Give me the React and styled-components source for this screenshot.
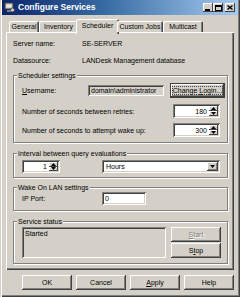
import React from 'react';
import styled, { createGlobalStyle, css } from 'styled-components';

const GlobalStyle = createGlobalStyle`
  html, body { margin: 0; padding: 0; background: #d4d0c8; }
  body {
    font-family: "Liberation Sans", Arial, sans-serif;
    font-size: 7px;
    line-height: 9px;
    color: #000;
  }
  * { box-sizing: border-box; }
`;

const raised = css`
  background: #d4d0c8;
  box-shadow: inset -1px -1px #404040, inset 1px 1px #fff, inset -2px -2px #808080;
`;

const raisedThin = css`
  background: #d4d0c8;
  box-shadow: inset -1px -1px #404040, inset 1px 1px #fff;
`;

const sunken = css`
  box-shadow: inset 1px 1px #808080, inset -1px -1px #fff, inset 2px 2px #404040, inset -2px -2px #d4d0c8;
`;

const Window = styled.div`
  width: 240px;
  height: 297px;
  display: flex;
  flex-direction: column;
  padding: 0 2px 2px;
  background: #d4d0c8;
  box-shadow: inset 1px 0 #d4d0c8, inset 2px 0 #fff, inset -1px -1px #404040, inset -2px -2px #808080;
`;

const TitleBar = styled.div`
  height: 15px;
  display: flex;
  align-items: center;
  gap: 3px;
  padding: 0 3px 0 2px;
  background: linear-gradient(90deg, #0a246a 0%, #3a6ea5 45%, #a6caf0 100%);
`;

const Title = styled.span`
  color: #fff;
  font-weight: bold;
  font-size: 8.5px;
  white-space: nowrap;
`;

const Controls = styled.div`
  margin-left: auto;
  display: flex;
`;

const TitleButton = styled.div`
  width: 10px;
  height: 9px;
  margin-left: ${p => (p.$gap ? 2 : 0)}px;
  display: flex;
  align-items: center;
  justify-content: center;
  ${raisedThin}
`;

const TabStrip = styled.div`
  height: 13px;
  margin-top: 4px;
  padding-left: 7px;
  display: flex;
  align-items: flex-end;
  position: relative;
  z-index: 2;
`;

const Tab = styled.div`
  width: ${p => p.$w + (p.$active ? 4 : 0)}px;
  height: ${p => (p.$active ? 15 : 11)}px;
  margin: 0 ${p => (p.$active ? -2 : 0)}px ${p => (p.$active ? -2 : 0)}px;
  padding-bottom: ${p => (p.$active ? 3 : 0)}px;
  display: flex;
  align-items: center;
  justify-content: center;
  white-space: nowrap;
  background: #d4d0c8;
  border-radius: 2px 2px 0 0;
  box-shadow: inset 1px 1px #fff, inset -1px 0 #404040, inset -2px 0 #808080;
`;

const Panel = styled.div`
  flex: 1;
  margin: 0 4px;
  padding: 6px 6px 5px 7px;
  display: flex;
  flex-direction: column;
  position: relative;
  z-index: 1;
  box-shadow: inset 1px 1px #fff, inset -1px -1px #404040, inset -2px -2px #808080;
`;

const InfoRow = styled.div`
  display: grid;
  grid-template-columns: 69px 1fr;
  align-items: center;
  height: 10px;
  margin-top: ${p => p.$mt || 0}px;
  white-space: nowrap;
`;

const Group = styled.div`
  position: relative;
  margin-top: ${p => p.$mt}px;
  padding: ${p => p.$pad};
  border: 1px solid #808080;
  box-shadow: inset 1px 1px #fff, 1px 1px #fff;
`;

const Legend = styled.span`
  position: absolute;
  top: -5px;
  left: 3px;
  padding: 0 1px;
  background: #d4d0c8;
  white-space: nowrap;
`;

const Rows = styled.div`
  display: flex;
  flex-direction: column;
`;

const Row = styled.div`
  display: flex;
  align-items: center;
  justify-content: ${p => p.$justify || 'flex-start'};
  gap: ${p => p.$gap || 0}px;
  margin-top: ${p => p.$mt || 0}px;
  white-space: nowrap;
`;

const Label = styled.span`
  flex: ${p => (p.$w ? 'none' : 1)};
  width: ${p => (p.$w ? `${p.$w}px` : 'auto')};
`;

const Field = styled.div`
  width: ${p => p.$w}px;
  height: ${p => p.$h}px;
  padding: 2px 2px 2px 3px;
  display: flex;
  align-items: ${p => (p.$top ? 'flex-start' : 'center')};
  background: ${p => (p.$readonly ? '#d4d0c8' : '#fff')};
  overflow: hidden;
  white-space: nowrap;
  ${sunken}
`;

const SpinBox = styled.div`
  width: ${p => p.$w}px;
  height: ${p => p.$h}px;
  margin-right: ${p => p.$mr || 0}px;
  padding: 2px;
  display: flex;
  background: #fff;
  ${sunken}
`;

const SpinValue = styled.div`
  flex: 1;
  display: flex;
  align-items: center;
  justify-content: flex-end;
  padding-right: 2px;
`;

const SpinButtons = styled.div`
  width: 9px;
  display: flex;
  flex-direction: column;
`;

const SpinButton = styled.div`
  flex: 1;
  display: flex;
  align-items: center;
  justify-content: center;
  ${raisedThin}
`;

const Combo = styled.div`
  width: ${p => p.$w}px;
  height: 13px;
  padding: 2px;
  display: flex;
  background: #fff;
  ${sunken}
`;

const ComboText = styled.div`
  flex: 1;
  display: flex;
  align-items: center;
  padding-left: 2px;
`;

const DropButton = styled.div`
  width: 11px;
  display: flex;
  align-items: center;
  justify-content: center;
  ${raised}
`;

const Button = styled.button`
  position: relative;
  width: ${p => p.$w || 50}px;
  height: 15px;
  padding: 0;
  border: 0;
  font: inherit;
  white-space: nowrap;
  overflow: visible;
  color: ${p => (p.disabled ? '#808080' : '#000')};
  text-shadow: ${p => (p.disabled ? '1px 1px #fff' : 'none')};
  ${raised}
  ${p =>
    p.$default &&
    css`
      box-shadow: inset 0 0 0 1px #404040, inset -2px -2px #404040, inset 2px 2px #fff, inset -3px -3px #808080;
      &::after {
        content: '';
        position: absolute;
        inset: 3px 2px;
        border: 1px dotted #404040;
      }
    `}
`;

const ButtonStack = styled.div`
  display: flex;
  flex-direction: column;
  gap: 1px;
`;

const ButtonRow = styled.div`
  height: 15px;
  margin: 5px 4px 5px;
  display: flex;
  justify-content: flex-end;
  gap: 4px;
`;

const Arrow = ({ up }) => (
  <svg width="5" height="3" viewBox="0 0 5 3">
    <polygon points={up ? '2.5,0 5,3 0,3' : '0,0 5,0 2.5,3'} fill="#000" />
  </svg>
);

const AppIcon = () => (
  <svg width="11" height="11" viewBox="0 0 11 11">
    <rect x="1" y="1" width="8" height="6" fill="#c0c0c0" stroke="#404040" strokeWidth="1" />
    <rect x="2.5" y="2.5" width="5" height="3" fill="#e8e8e8" />
    <rect x="3" y="8" width="5" height="2" fill="#808080" />
    <circle cx="8.5" cy="8" r="2" fill="#d4d0c8" stroke="#404040" strokeWidth="0.8" />
  </svg>
);

const tabs = [
  { label: 'General', w: 30 },
  { label: 'Inventory', w: 39 },
  { label: 'Scheduler', w: 39, active: true },
  { label: 'Custom Jobs', w: 46 },
  { label: 'Multicast', w: 40 },
];

function Spinner({ value, w, h, mr }) {
  return (
    <SpinBox $w={w} $h={h} $mr={mr}>
      <SpinValue>{value}</SpinValue>
      <SpinButtons>
        <SpinButton><Arrow up /></SpinButton>
        <SpinButton><Arrow /></SpinButton>
      </SpinButtons>
    </SpinBox>
  );
}

export default function App() {
  return (
    <>
      <GlobalStyle />
      <Window>
        <TitleBar>
          <AppIcon />
          <Title>Configure Services</Title>
          <Controls>
            <TitleButton>
              <svg width="6" height="6" viewBox="0 0 6 6"><rect x="0" y="4" width="5" height="2" fill="#000" /></svg>
            </TitleButton>
            <TitleButton>
              <svg width="7" height="6" viewBox="0 0 7 6"><rect x="0.5" y="0.5" width="6" height="5" fill="none" stroke="#000" /><rect x="0" y="0" width="7" height="2" fill="#000" /></svg>
            </TitleButton>
            <TitleButton $gap>
              <svg width="6" height="5" viewBox="0 0 6 5"><path d="M0.5 0.5 L5.5 4.5 M5.5 0.5 L0.5 4.5" stroke="#000" strokeWidth="1.3" /></svg>
            </TitleButton>
          </Controls>
        </TitleBar>

        <TabStrip>
          {tabs.map(t => (
            <Tab key={t.label} $w={t.w} $active={t.active}>{t.label}</Tab>
          ))}
        </TabStrip>

        <Panel>
          <InfoRow>
            <span>Server name:</span>
            <span>SE-SERVER</span>
          </InfoRow>
          <InfoRow $mt={7}>
            <span>Datasource:</span>
            <span>LANDesk Management database</span>
          </InfoRow>

          <Group $mt={10} $pad="7px 2px 5px 8px">
            <Legend>Scheduler settings</Legend>
            <Rows>
              <Row $gap={6}>
                <Label><u>U</u>sername:</Label>
                <Field $w={76} $h={11} $readonly>domain\administrator</Field>
                <Button $w={55} $default>Change <u>L</u>ogin...</Button>
              </Row>
              <Row $mt={6}>
                <Label>Number of seconds between retries:</Label>
                <Spinner value="180" w={47} h={14} mr={5} />
              </Row>
              <Row $mt={5}>
                <Label>Number of seconds to attempt wake up:</Label>
                <Spinner value="300" w={47} h={14} mr={5} />
              </Row>
            </Rows>
          </Group>

          <Group $mt={10} $pad="6px 7px 4px 8px">
            <Legend>Interval between query evaluations</Legend>
            <Row $justify="space-between">
              <Spinner value="1" w={38} h={13} />
              <Combo $w={118}>
                <ComboText>Hours</ComboText>
                <DropButton><Arrow /></DropButton>
              </Combo>
            </Row>
          </Group>

          <Group $mt={9} $pad="4px 7px 5px 8px">
            <Legend>Wake On LAN settings</Legend>
            <Row>
              <Label $w={80}>IP Port:</Label>
              <Field $w={44} $h={13}>0</Field>
            </Row>
          </Group>

          <Group $mt={10} $pad="5px 6px 5px 8px">
            <Legend>Service status</Legend>
            <Row $gap={5}>
              <Field $w={144} $h={31} $readonly $top>Started</Field>
              <ButtonStack>
                <Button disabled><u>S</u>tart</Button>
                <Button>S<u>t</u>op</Button>
              </ButtonStack>
            </Row>
          </Group>
        </Panel>

        <ButtonRow>
          <Button>OK</Button>
          <Button>Cancel</Button>
          <Button><u>A</u>pply</Button>
          <Button>Help</Button>
        </ButtonRow>
      </Window>
    </>
  );
}
